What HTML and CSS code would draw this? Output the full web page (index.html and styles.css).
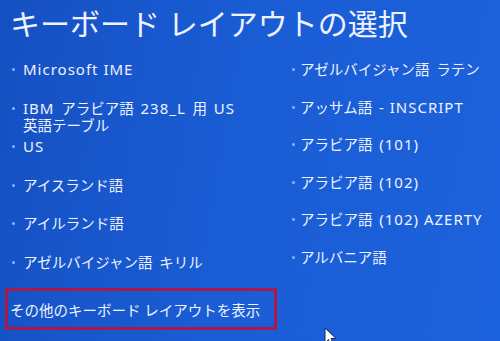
FILE: index.html
```html
<!DOCTYPE html>
<html lang="ja">
<head>
    <meta charset="UTF-8">
    <meta name="viewport" content="width=device-width, initial-scale=1.0">
    <title>キーボード レイアウトの選択</title>
    <link rel="stylesheet" href="styles.css">
</head>
<body>
    <div class="screen">
        <h1 class="title">キーボード レイアウトの選択</h1>

        <div class="layouts">
            <ul class="layout-list">
                <li><span class="en">Microsoft IME</span></li>
                <li><span class="en">IBM</span> アラビア語 <span class="en">238_L</span> 用 <span class="en">US</span><br>英語テーブル</li>
                <li><span class="en">US</span></li>
                <li>アイスランド語</li>
                <li>アイルランド語</li>
                <li>アゼルバイジャン語 キリル</li>
            </ul>
            <ul class="layout-list right">
                <li>アゼルバイジャン語 ラテン</li>
                <li>アッサム語 <span class="en">- INSCRIPT</span></li>
                <li>アラビア語 <span class="en">(101)</span></li>
                <li>アラビア語 <span class="en">(102)</span></li>
                <li>アラビア語 <span class="en">(102) AZERTY</span></li>
                <li>アルバニア語</li>
            </ul>
        </div>

        <button class="more">その他のキーボード レイアウトを表示</button>

        <!-- mouse pointer -->
        <svg class="pointer" width="14" height="20" viewBox="0 0 14 20">
            <path d="M1 1 L1 16 L4.5 12.5 L7 18.5 L9.5 17.5 L7 11.5 L12 11.5 Z" fill="#ffffff" stroke="#1b2a55" stroke-width="1"/>
        </svg>
    </div>
</body>
</html>
```

FILE: styles.css
```css
body{
    margin: 0;
    background-color: #1757cc;
}
.screen{
    position: relative;
    width: 500px;
    height: 341px;
    overflow: hidden;
    background: linear-gradient(100deg, #1550c2 0%, #1a5cd4 45%, #1c62dc 100%);
    color: #eef3ff;
    font-family: "Noto Sans", "Noto Sans CJK JP", sans-serif;
}
.title{
    margin: 0;
    padding: 4px 0 0 10px;
    font-size: 30px;
    font-weight: 400;
    line-height: 40px;
}
.layouts{
    display: grid;
    grid-template-columns: 280px 1fr;
    margin: 17px 0 0 12px;
}
.layout-list{
    list-style: none;
    margin: 0;
    padding: 0;
    font-size: 14.5px;
    line-height: 17px;
    word-spacing: 3px;
    li{
        position: relative;
        height: 38.5px;
        padding-left: 11px;
        white-space: nowrap;
    }
    li::before{
        content: "";
        position: absolute;
        left: 0;
        top: 7px;
        width: 3px;
        height: 3px;
        border-radius: 50%;
        background-color: #6ac6f4;
    }
}
.layout-list.right li{
    height: 37.6px;
    padding-left: 8px;
}
/* latin runs are drawn wider than the kana */
.en{
    font-size: 15px;
    letter-spacing: 1px;
    word-spacing: 0;
}
.more{
    display: block;
    margin: -4px 0 0 5px;
    width: 272px;
    height: 42px;
    padding: 0 0 0 2px;
    border: 3px solid #a81a4a;
    background: transparent;
    color: #eef3ff;
    font-family: "Noto Sans", "Noto Sans CJK JP", sans-serif;
    font-size: 14.5px;
    text-align: left;
}
.pointer{
    position: absolute;
    left: 324px;
    top: 327px;
}
```
